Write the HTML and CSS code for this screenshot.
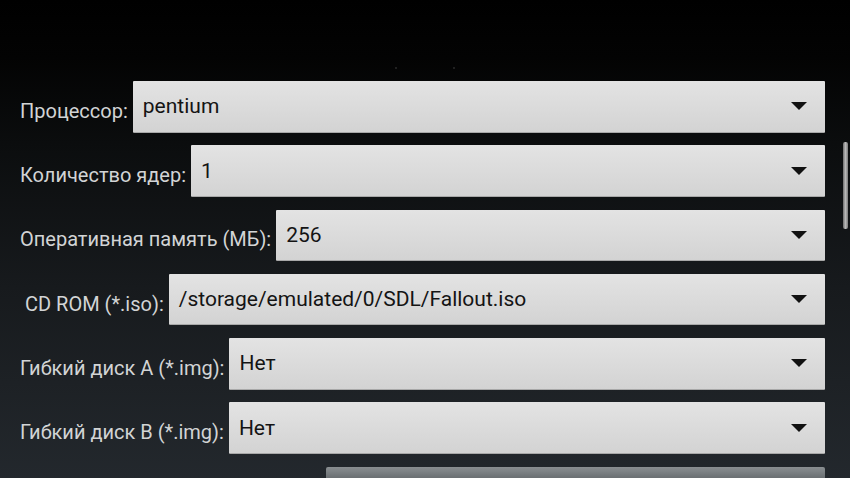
FILE: index.html
```html
<!DOCTYPE html>
<html lang="ru">
<head>
<meta charset="utf-8">
<link rel="stylesheet" href="styles.css">
</head>
<body>
<div class="screen">
  <div class="dots"><span class="dot"></span><span class="dot"></span></div>
  <div class="form">
    <div class="row">
      <span class="label">Процессор:</span>
      <div class="spinner"><span class="value">pentium</span><span class="arrow"></span></div>
    </div>
    <div class="row">
      <span class="label">Количество ядер:</span>
      <div class="spinner"><span class="value">1</span><span class="arrow"></span></div>
    </div>
    <div class="row">
      <span class="label">Оперативная память (МБ):</span>
      <div class="spinner"><span class="value">256</span><span class="arrow"></span></div>
    </div>
    <div class="row">
      <span class="label indent">CD ROM (*.iso):</span>
      <div class="spinner"><span class="value">/storage/emulated/0/SDL/Fallout.iso</span><span class="arrow"></span></div>
    </div>
    <div class="row">
      <span class="label">Гибкий диск A (*.img):</span>
      <div class="spinner"><span class="value">Нет</span><span class="arrow"></span></div>
    </div>
    <div class="row">
      <span class="label">Гибкий диск B (*.img):</span>
      <div class="spinner"><span class="value">Нет</span><span class="arrow"></span></div>
    </div>
    <div class="row end">
      <div class="button"></div>
    </div>
  </div>
  <div class="scrollbar"></div>
</div>
</body>
</html>
```
FILE: styles.css
```css
html, body {
  margin: 0;
  padding: 0;
  height: 100%;
  overflow: hidden;
}
body {
  font-family: Roboto, "Noto Sans", sans-serif;
  background: #000;
}
.screen {
  position: relative;
  width: 850px;
  height: 478px;
  background: linear-gradient(180deg, #000 0%, #030303 12%, #0b0d0e 30%, #171a1d 60%, #23282d 100%);
  overflow: hidden;
}
.dots {
  height: 81px;
  display: flex;
  justify-content: center;
  gap: 56px;
  align-items: flex-start;
  box-sizing: border-box;
  padding-top: 67px;
}
.dot {
  width: 2px;
  height: 2px;
  border-radius: 50%;
  background: #2a2a2a;
}
.form {
  display: flex;
  flex-direction: column;
  gap: 12.8px;
  padding: 0 25px 0 20px;
}
.row {
  display: flex;
  align-items: center;
  gap: 5px;
  height: 51.5px;
}
.label {
  color: #d2d4d5;
  font-size: 20px;
  white-space: nowrap;
  padding-top: 8px;
}
.label.indent {
  padding-left: 5px;
}
.spinner {
  flex: 1;
  height: 51.5px;
  box-sizing: border-box;
  display: flex;
  align-items: center;
  padding: 0 18px 0 10px;
  background: linear-gradient(180deg, #e3e3e3 0%, #dbdbdb 50%, #d3d3d3 100%);
  border-bottom: 1px solid #a8a8a8;
  border-radius: 1px;
}
.value {
  flex: 1;
  color: #141414;
  font-size: 21px;
  white-space: nowrap;
}
.arrow {
  width: 0;
  height: 0;
  border-left: 8px solid transparent;
  border-right: 8px solid transparent;
  border-top: 8px solid #111;
}
.row.end {
  justify-content: flex-end;
}
.button {
  width: 499px;
  height: 51px;
  align-self: flex-start;
  background: linear-gradient(180deg, #8a8f92 0%, #6c7174 20%, #5b6063 100%);
  border-radius: 2px;
}
.scrollbar {
  position: absolute;
  right: 2px;
  top: 142px;
  width: 5px;
  height: 87px;
  border-radius: 2px;
  background: linear-gradient(90deg, #6d6d6d, #b8b8b8 50%, #7a7a7a);
}
```
